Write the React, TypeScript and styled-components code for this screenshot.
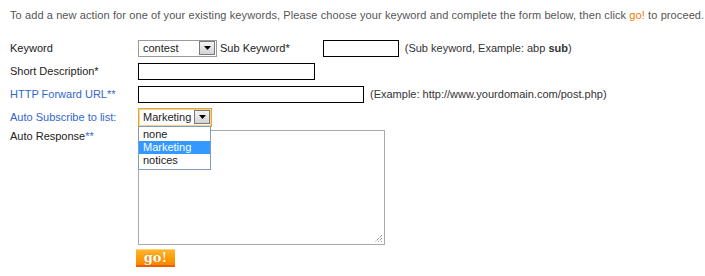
import React from 'react'
import styled, { createGlobalStyle } from 'styled-components'

const Global = createGlobalStyle`
  body {
    margin: 0;
    background: #fff;
    font-family: "Liberation Sans", Arial, sans-serif;
    font-size: 11px;
    color: #333;
  }
`

const Page = styled.div`
  padding: 9px 10px 0 10px;
`

const Intro = styled.p`
  margin: 0 0 17px 0;
  color: #555;
  line-height: 13px;
  letter-spacing: 0.1px;
  white-space: nowrap;
`

const Go = styled.span`
  color: #f07800;
`

const Form = styled.div`
  display: grid;
  grid-template-columns: 128px 1fr;
  row-gap: 5px;
  align-items: center;
`

const Label = styled.div<{ $blue?: boolean; $top?: boolean }>`
  color: ${p => (p.$blue ? '#3366cc' : '#222')};
  align-self: ${p => (p.$top ? 'start' : 'center')};
  line-height: 13px;
  margin-top: ${p => (p.$top ? '-1px' : '0')};
`

const Star = styled.span`
  color: #3366cc;
`

const Field = styled.div`
  display: flex;
  align-items: center;
  gap: 6px;
  height: 18px;
  position: relative;
`

const Input = styled.div<{ $w: number }>`
  width: ${p => p.$w}px;
  height: 17px;
  box-sizing: border-box;
  border: 1px solid #000;
  background: #fff;
`

const Hint = styled.span`
  color: #333;
`

const Select = styled.div<{ $w: number; $focus?: boolean }>`
  width: ${p => p.$w}px;
  height: ${p => (p.$focus ? 19 : 17)}px;
  box-sizing: border-box;
  border: 1px solid ${p => (p.$focus ? '#e0a640' : '#9a9a9a')};
  box-shadow: ${p => (p.$focus ? 'inset 0 0 0 1px #f4d28c' : 'none')};
  display: flex;
  align-items: center;
  background: #fff;
  padding-left: 4px;
  color: #222;
  font-size: 11px;
`

const SelectText = styled.span`
  flex: 1;
`

const Arrow = styled.div`
  width: 16px;
  height: 14px;
  margin-right: 1px;
  box-sizing: border-box;
  border: 1px solid #7a7a7a;
  background: linear-gradient(#f4f4f4, #d4d4d4);
  display: flex;
  align-items: center;
  justify-content: center;
`

const SubLabel = styled.span`
  margin-left: -3px;
  margin-right: 27px;
  color: #222;
`

const Menu = styled.div`
  position: absolute;
  left: 0;
  top: 18px;
  width: 73px;
  box-sizing: border-box;
  border: 1px solid #7f9db9;
  background: #fff;
  z-index: 2;
  padding: 1px 0 2px;
`

const Option = styled.div<{ $on?: boolean }>`
  height: 13px;
  line-height: 13px;
  padding-left: 4px;
  font-size: 11px;
  color: ${p => (p.$on ? '#fff' : '#222')};
  background: ${p => (p.$on ? '#3399ff' : 'transparent')};
`

const TextArea = styled.div`
  width: 247px;
  height: 115px;
  box-sizing: border-box;
  border: 1px solid #a9a9a9;
  background: #fff;
  position: relative;
  margin-top: -1px;
`

const Grip = styled.svg`
  position: absolute;
  right: 1px;
  bottom: 1px;
`

const GoButton = styled.button`
  margin: 4px 0 0 126px;
  width: 39px;
  height: 18px;
  border: none;
  border-radius: 1px;
  padding: 0;
  background: linear-gradient(#ffb733 0%, #ff9a00 55%, #f58200 100%);
  box-shadow: inset 0 -2px 0 #f05a00, inset 0 1px 0 #ffd27a;
  color: #fff;
  font-family: "DejaVu Serif", "Liberation Serif", serif;
  font-weight: bold;
  font-size: 13px;
  line-height: 16px;
  text-shadow: 0 0 1px #c86400;
  display: block;
`

const ArrowIcon = () => (
  <svg width="7" height="4" viewBox="0 0 7 4"><path d="M0 0h7L3.5 4z" fill="#000" /></svg>
)

export default function App() {
  return (
    <>
      <Global />
      <Page>
        <Intro>
          To add a new action for one of your existing keywords, Please choose your keyword and complete the form below, then click <Go>go!</Go> to proceed.
        </Intro>
        <Form>
          <Label>Keyword</Label>
          <Field>
            <Select $w={79}>
              <SelectText>contest</SelectText>
              <Arrow><ArrowIcon /></Arrow>
            </Select>
            <SubLabel>Sub Keyword*</SubLabel>
            <Input $w={76} />
            <Hint>(Sub keyword, Example: abp <b>sub</b>)</Hint>
          </Field>

          <Label>Short Description*</Label>
          <Field>
            <Input $w={177} />
          </Field>

          <Label $blue>HTTP Forward URL<Star>**</Star></Label>
          <Field>
            <Input $w={226} />
            <Hint>(Example: http://www.yourdomain.com/post.php)</Hint>
          </Field>

          <Label $blue>Auto Subscribe to list:</Label>
          <Field>
            <Select $w={74} $focus>
              <SelectText>Marketing</SelectText>
              <Arrow><ArrowIcon /></Arrow>
            </Select>
            <Menu>
              <Option>none</Option>
              <Option $on>Marketing</Option>
              <Option>notices</Option>
            </Menu>
          </Field>

          <Label $top>Auto Response<Star>**</Star></Label>
          <TextArea>
            <Grip width="9" height="9" viewBox="0 0 9 9">
              <path d="M8 1L1 8M8 4L4 8M8 7L7 8" stroke="#666" strokeWidth="1" strokeDasharray="1 1" />
            </Grip>
          </TextArea>
        </Form>
        <GoButton>go!</GoButton>
      </Page>
    </>
  )
}
